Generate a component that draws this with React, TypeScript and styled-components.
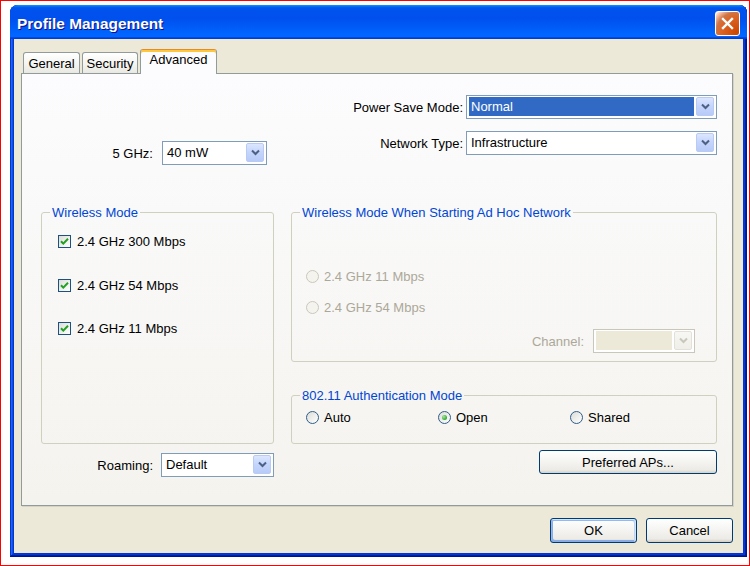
import React from "react";
import styled, { createGlobalStyle, css } from "styled-components";

const GlobalStyle = createGlobalStyle`
  html, body { margin: 0; padding: 0; background: #ffffff; }
  body {
    font-family: "Liberation Sans", Arial, sans-serif;
    font-size: 13px;
    line-height: 15px;
    color: #000000;
  }
  * { box-sizing: border-box; }
`;

const Frame = styled.div`
  width: 750px;
  height: 566px;
  border: 1px solid #ff0000;
  background: #ffffff;
  padding: 4px 0 0 9px;
`;

const Window = styled.div`
  width: 737px;
  height: 552px;
  display: flex;
  flex-direction: column;
  border-radius: 8px 8px 0 0;
  overflow: hidden;
  background: #0831d9;
  box-shadow: inset -1px -1px #00138c, inset 1px 1px #0831d9,
    inset -2px -2px #001ea0, inset 2px 2px #166aee, inset -3px -3px #003bda,
    inset 3px 3px #0855dd;
`;

const TitleBar = styled.div`
  height: 34px;
  flex: none;
  display: flex;
  align-items: center;
  justify-content: space-between;
  padding: 2px 7px 0 7px;
  background: linear-gradient(
    180deg,
    #0997ff,
    #0053ee 8%,
    #0050ee 40%,
    #06f 88%,
    #06f 93%,
    #005bff 95%,
    #003dd7 96%,
    #003dd7
  );
`;

const Title = styled.div`
  font-family: "Liberation Sans", Arial, sans-serif;
  font-weight: bold;
  font-size: 15.4px;
  color: #ffffff;
  text-shadow: 1px 1px #0f1089;
  letter-spacing: 0;
  padding-top: 1px;
`;

const CloseButton = styled.div`
  width: 25px;
  height: 25px;
  border: 1px solid #ffffff;
  border-radius: 3px;
  display: flex;
  align-items: center;
  justify-content: center;
  background: radial-gradient(
    circle at 90% 90%,
    #cc4600 0%,
    #dc6527 55%,
    #cd7546 70%,
    #ffccb2 90%,
    #ffffff 100%
  );
`;

const Body = styled.div`
  flex: 1;
  margin: 0 4px 4px 4px;
  background: #ece9d8;
  padding: 10px 10px 10px 7px;
  display: flex;
  flex-direction: column;
`;

const TabList = styled.div`
  height: 24px;
  display: flex;
  align-items: flex-end;
  gap: 2px;
  margin-left: 2px;
  position: relative;
  z-index: 1;
`;

const Tab = styled.div<{ $w: number; $active?: boolean }>`
  width: ${(p) => p.$w}px;
  height: 21px;
  border: 1px solid #919b9c;
  border-bottom: none;
  border-radius: 3px 3px 0 0;
  background: linear-gradient(180deg, #ffffff, #f3f3ef 60%, #e9e8e1);
  display: flex;
  align-items: center;
  justify-content: center;
  padding-top: 1px;
  ${(p) =>
    p.$active &&
    css`
      height: 25px;
      margin-bottom: -1px;
      background: #fcfcfe;
      border-top: 1px solid #e68b2c;
      box-shadow: inset 0 2px #ffc73c;
      padding-top: 0;
      padding-bottom: 5px;
    `}
`;

const Panel = styled.div`
  height: 433px;
  border: 1px solid #919b9c;
  background: linear-gradient(180deg, #fcfcfe, #f4f3ee);
  box-shadow: 1px 1px 0 #d6d3c6;
  padding: 21px 15px 0 19px;
`;

const Columns = styled.div`
  display: grid;
  grid-template-columns: 233px 426px;
  column-gap: 17px;
`;

const Column = styled.div`
  display: flex;
  flex-direction: column;
`;

const FieldRow = styled.div<{ $mt?: number; $pr?: number; $gap: number }>`
  display: flex;
  align-items: center;
  justify-content: flex-end;
  margin-top: ${(p) => p.$mt ?? 0}px;
  padding-right: ${(p) => p.$pr ?? 0}px;
  gap: ${(p) => p.$gap}px;
`;

const Label = styled.span<{ $disabled?: boolean }>`
  white-space: nowrap;
  color: ${(p) => (p.$disabled ? "#aca899" : "#000000")};
`;

const Combo = styled.div<{ $w: number; $disabled?: boolean }>`
  width: ${(p) => p.$w}px;
  height: 24px;
  border: 1px solid ${(p) => (p.$disabled ? "#c9c7ba" : "#7f9db9")};
  background: #ffffff;
  display: flex;
  padding: 1px 2px 2px 2px;
`;

const ComboText = styled.div<{ $selected?: boolean; $disabled?: boolean }>`
  flex: 1;
  height: 19px;
  margin-right: 2px;
  padding-left: 2px;
  display: flex;
  align-items: center;
  white-space: nowrap;
  color: #000000;
  ${(p) =>
    p.$selected &&
    css`
      background: #316ac5;
      color: #ffffff;
    `}
  ${(p) =>
    p.$disabled &&
    css`
      background: #ece9d8;
    `}
`;

const ComboArrow = styled.div<{ $disabled?: boolean }>`
  width: 18px;
  height: 19px;
  border: 1px solid ${(p) => (p.$disabled ? "#e3e1d7" : "#b9cbf5")};
  border-radius: 2px;
  background: ${(p) =>
    p.$disabled
      ? "linear-gradient(180deg, #f7f7f4, #efeee8)"
      : "linear-gradient(180deg, #dce6fe 0%, #c6d6fc 45%, #b7cbf8 100%)"};
  display: flex;
  align-items: center;
  justify-content: center;
  color: ${(p) => (p.$disabled ? "#c9c7ba" : "#4d6185")};
`;

const Group = styled.fieldset<{ $h: number; $mt: number }>`
  margin: ${(p) => p.$mt}px 0 0 0;
  padding: 0;
  min-width: 0;
  height: ${(p) => p.$h}px;
  border: 1px solid #d0d0bf;
  border-radius: 3px;
`;

const Legend = styled.legend`
  margin-left: 8px;
  padding: 0 2px;
  color: #0046d5;
  line-height: 15px;
`;

const GroupBody = styled.div<{ $pt?: number; $pl: number; $pr?: number }>`
  padding: ${(p) => p.$pt ?? 0}px ${(p) => p.$pr ?? 0}px 0 ${(p) => p.$pl}px;
  display: flex;
  flex-direction: column;
`;

const CheckRow = styled.div`
  height: 43.5px;
  display: flex;
  align-items: center;
  gap: 6px;
`;

const CheckBox = styled.div`
  width: 13px;
  height: 13px;
  border: 1px solid #1c5180;
  background: linear-gradient(135deg, #dcdcd7, #ffffff);
  display: flex;
  align-items: center;
  justify-content: center;
`;

const RadioRow = styled.div<{ $h: number }>`
  height: ${(p) => p.$h}px;
  display: flex;
  align-items: center;
`;

const RadioItem = styled.div<{ $w?: number }>`
  width: ${(p) => (p.$w ? `${p.$w}px` : "auto")};
  display: flex;
  align-items: center;
  gap: 5px;
`;

const RadioCircle = styled.div<{ $disabled?: boolean }>`
  width: 13px;
  height: 13px;
  border-radius: 50%;
  border: 1px solid ${(p) => (p.$disabled ? "#cac8bb" : "#2f5d8a")};
  background: ${(p) =>
    p.$disabled ? "#f4f3ee" : "linear-gradient(135deg, #dcdcd7, #ffffff)"};
  display: flex;
  align-items: center;
  justify-content: center;
`;

const RadioDot = styled.div`
  width: 5px;
  height: 5px;
  border-radius: 50%;
  background: radial-gradient(circle at 35% 35%, #a3e4a1, #21a121 80%);
`;

const RadioText = styled.span<{ $disabled?: boolean }>`
  white-space: nowrap;
  color: ${(p) => (p.$disabled ? "#aca899" : "#000000")};
`;

const ButtonRow = styled.div<{ $mt: number }>`
  display: flex;
  justify-content: flex-end;
  gap: 9px;
  margin-top: ${(p) => p.$mt}px;
`;

const Button = styled.div<{ $w: number; $h: number; $default?: boolean }>`
  width: ${(p) => p.$w}px;
  height: ${(p) => p.$h}px;
  border: 1px solid #003c74;
  border-radius: 3px;
  background: linear-gradient(180deg, #ffffff, #ecebe6 86%, #d6d0c5);
  display: flex;
  align-items: center;
  justify-content: center;
  white-space: nowrap;
  ${(p) =>
    p.$default &&
    css`
      box-shadow: inset -1px 1px #cee7ff, inset 1px 2px #98b8ea,
        inset -2px 2px #bcd4f6, inset 1px -1px #89ade4,
        inset 2px -2px #89ade4;
    `}
`;

const Chevron = () => (
  <svg width="9" height="7" viewBox="0 0 9 7">
    <path
      d="M1 1.5 L4.5 5 L8 1.5"
      fill="none"
      stroke="currentColor"
      strokeWidth="2"
    />
  </svg>
);

const CheckMark = () => (
  <svg width="11" height="11" viewBox="0 0 11 11">
    <path
      d="M2 5.2 L4.3 7.6 L9 2.8"
      fill="none"
      stroke="#21a121"
      strokeWidth="2"
    />
  </svg>
);

const Select = ({
  w,
  value,
  selected,
  disabled,
}: {
  w: number;
  value?: string;
  selected?: boolean;
  disabled?: boolean;
}) => (
  <Combo $w={w} $disabled={disabled}>
    <ComboText $selected={selected} $disabled={disabled}>
      {value}
    </ComboText>
    <ComboArrow $disabled={disabled}>
      <Chevron />
    </ComboArrow>
  </Combo>
);

const Check = ({ label }: { label: string }) => (
  <CheckRow>
    <CheckBox>
      <CheckMark />
    </CheckBox>
    <span>{label}</span>
  </CheckRow>
);

const Radio = ({
  label,
  checked,
  disabled,
  w,
}: {
  label: string;
  checked?: boolean;
  disabled?: boolean;
  w?: number;
}) => (
  <RadioItem $w={w}>
    <RadioCircle $disabled={disabled}>{checked && <RadioDot />}</RadioCircle>
    <RadioText $disabled={disabled}>{label}</RadioText>
  </RadioItem>
);

export default function App() {
  return (
    <>
      <GlobalStyle />
      <Frame>
        <Window>
          <TitleBar>
            <Title>Profile Management</Title>
            <CloseButton>
              <svg width="13" height="13" viewBox="0 0 13 13">
                <path
                  d="M2 2 L11 11 M11 2 L2 11"
                  stroke="#ffffff"
                  strokeWidth="2.4"
                  strokeLinecap="square"
                />
              </svg>
            </CloseButton>
          </TitleBar>
          <Body>
            <TabList>
              <Tab $w={57}>General</Tab>
              <Tab $w={56}>Security</Tab>
              <Tab $w={77} $active>
                Advanced
              </Tab>
            </TabList>
            <Panel>
              <Columns>
                <Column>
                  <FieldRow $mt={46} $pr={7} $gap={9}>
                    <Label>5 GHz:</Label>
                    <Select w={105} value="40 mW" />
                  </FieldRow>
                  <Group $mt={40} $h={239}>
                    <Legend>Wireless Mode</Legend>
                    <GroupBody $pl={16}>
                      <Check label="2.4 GHz 300 Mbps" />
                      <Check label="2.4 GHz 54 Mbps" />
                      <Check label="2.4 GHz 11 Mbps" />
                    </GroupBody>
                  </Group>
                  <FieldRow $mt={9} $gap={8}>
                    <Label>Roaming:</Label>
                    <Select w={113} value="Default" />
                  </FieldRow>
                </Column>
                <Column>
                  <FieldRow $gap={3}>
                    <Label>Power Save Mode:</Label>
                    <Select w={251} value="Normal" selected />
                  </FieldRow>
                  <FieldRow $mt={12} $gap={3}>
                    <Label>Network Type:</Label>
                    <Select w={251} value="Infrastructure" />
                  </FieldRow>
                  <Group $mt={50} $h={157}>
                    <Legend>Wireless Mode When Starting Ad Hoc Network</Legend>
                    <GroupBody $pt={40.5} $pl={14} $pr={21}>
                      <RadioRow $h={31}>
                        <Radio label="2.4 GHz 11 Mbps" disabled />
                      </RadioRow>
                      <RadioRow $h={31}>
                        <Radio label="2.4 GHz 54 Mbps" disabled />
                      </RadioRow>
                      <FieldRow $mt={6.5} $gap={9}>
                        <Label $disabled>Channel:</Label>
                        <Select w={102} disabled />
                      </FieldRow>
                    </GroupBody>
                  </Group>
                  <Group $mt={26} $h={56}>
                    <Legend>802.11 Authentication Mode</Legend>
                    <GroupBody $pt={6.5} $pl={14}>
                      <RadioRow $h={15}>
                        <Radio label="Auto" w={132} />
                        <Radio label="Open" w={132} checked />
                        <Radio label="Shared" w={132} />
                      </RadioRow>
                    </GroupBody>
                  </Group>
                  <ButtonRow $mt={6}>
                    <Button $w={178} $h={24}>
                      Preferred APs...
                    </Button>
                  </ButtonRow>
                </Column>
              </Columns>
            </Panel>
            <ButtonRow $mt={12}>
              <Button $w={87} $h={25} $default>
                OK
              </Button>
              <Button $w={87} $h={25}>
                Cancel
              </Button>
            </ButtonRow>
          </Body>
        </Window>
      </Frame>
    </>
  );
}
